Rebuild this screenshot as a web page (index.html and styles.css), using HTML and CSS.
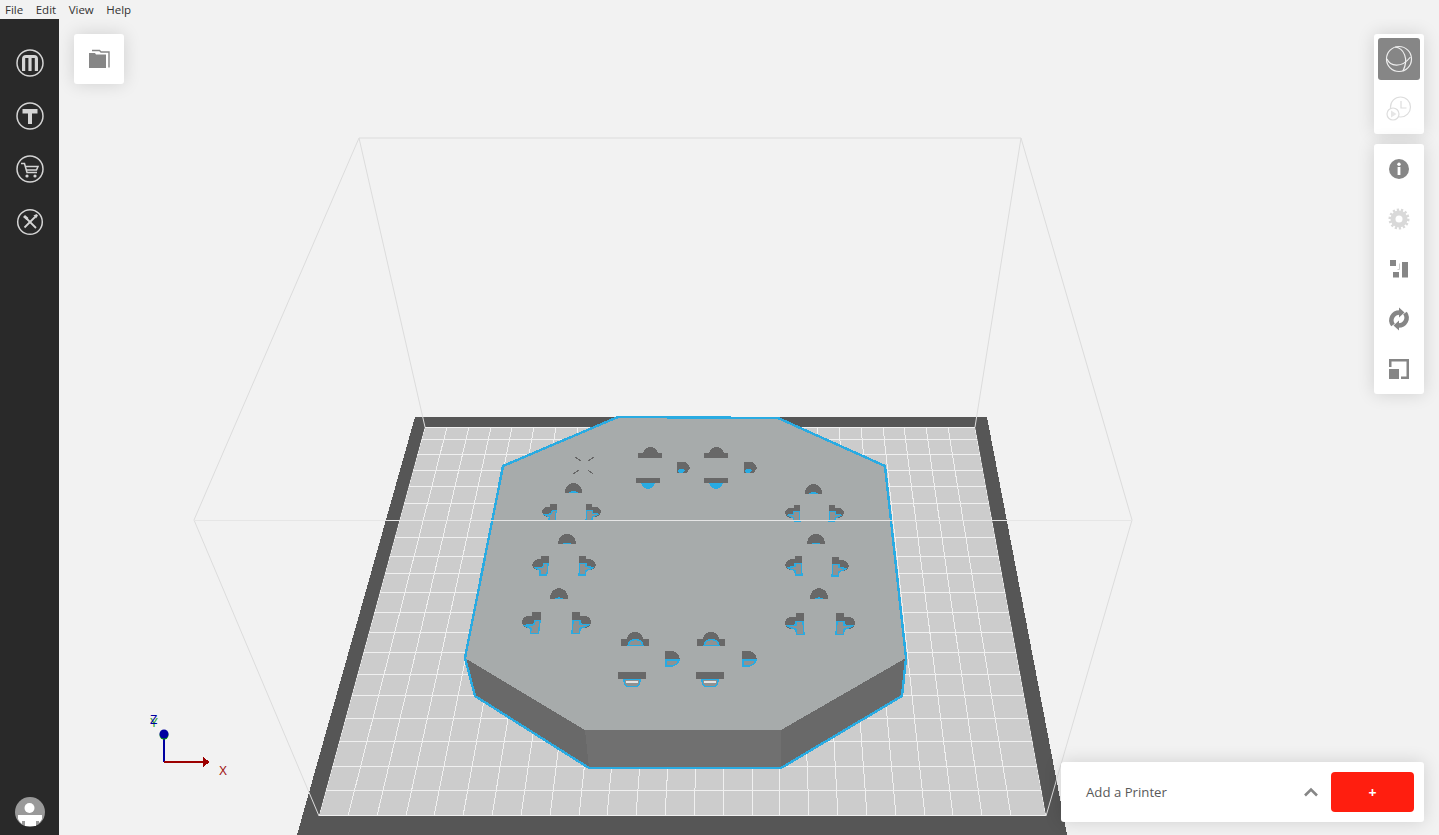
FILE: index.html
```html
<!DOCTYPE html>
<html>
  <head>
    <meta charset="UTF-8" />
    <title>MakerBot Print</title>
    <link rel="stylesheet" href="styles.css">
  </head>
  <body>
    <div class="menubar">
      <span class="menu-item">File</span>
      <span class="menu-item">Edit</span>
      <span class="menu-item">View</span>
      <span class="menu-item">Help</span>
    </div>
    <div class="main">
      <div class="sidebar">
        <div class="side-top">
          <svg class="side-icon" viewBox="0 0 28 28">
            <circle class="ring" cx="14" cy="14" r="13" />
            <path class="ico-fill" d="M6 22V10a4 4 0 0 1 4-4h8a4 4 0 0 1 4 4v12h-3.200V9h-3.200v13h-3.200V9H9.200v13z" />
          </svg>
          <svg class="side-icon" viewBox="0 0 28 28">
            <circle class="ring" cx="14" cy="14" r="13" />
            <path class="ico-fill" d="M6.500 7h15v4.500h-5.500V22h-4V11.500H6.500z" />
          </svg>
          <svg class="side-icon" viewBox="0 0 28 28">
            <circle class="ring" cx="14" cy="14" r="13" />
            <path class="ico-line" d="M5 8.500h3.500l2.500 9h10" />
            <path class="ico-line" d="M9 11.500h13l-1.500 3.500H10" />
            <circle class="ico-fill" cx="11" cy="21" r="1.600" />
            <circle class="ico-fill" cx="19" cy="21" r="1.600" />
          </svg>
          <svg class="side-icon" viewBox="0 0 28 28">
            <circle class="ring" cx="14" cy="14" r="12.300" />
            <path class="ico-wide" d="M10 10l10 10" />
            <path class="ico-wide" d="M19 9L8.500 19.500" />
            <path class="ico-fill" d="M7 9l2-2 3.500 3-2 2zM17.500 7.500l3-1.500 1.500 1.500-2 3z" />
          </svg>
        </div>
        <svg class="avatar" viewBox="0 0 30 30">
          <circle class="avatar-bg" cx="15" cy="15" r="15" />
          <circle class="avatar-fg" cx="14.500" cy="11" r="5" />
          <path class="avatar-fg" d="M3 18h24v4a15 15 0 0 1-3 4v-2h-3v5H10v-5H7v3a15 15 0 0 1-4-5z" />
        </svg>
      </div>

      <div class="viewport">
        <svg class="scene" viewBox="59 19 1380 816">
          <defs>
            <clipPath id="bed-clip"><polygon points="425,427 975,427 1046,816 319,816" /></clipPath>

            <g id="dome">
              <path class="hole" d="M0 10V8C1 3 5 0 9 0s8 3 9 8v2z" />
              <path class="blue-fill" d="M4 10c2-2 8-2 10 0z" />
            </g>
            <g id="bar-up">
              <rect class="hole" x="0" y="6" width="24" height="5" />
              <path class="hole" d="M5 7C5 3 9 0 12.500 0S20 3 20 7z" />
            </g>
            <g id="bar-down">
              <rect class="hole" x="0" y="0" width="24" height="5" />
              <path class="blue-fill" d="M5 5h14c-1 3-4 6-7 6s-6-3-7-6z" />
            </g>
            <g id="bar-up-open">
              <rect class="hole" x="0" y="7" width="28" height="7" />
              <path class="hole" d="M6 8C6 3 9 0 14 0s8 3 8 8z" />
              <path class="blue-open" d="M7 13.500C8 9 11 7.500 14.500 7.500S21 9 22 13.500z" />
            </g>
            <g id="bar-down-open">
              <rect class="hole" x="0" y="0" width="28" height="7" />
              <path class="blue-open" d="M6 7.500h16c0 4-2 6.500-3.500 7h-9C8 14 6 11.500 6 7.500z" />
              <rect class="pale" x="8" y="9" width="12" height="1.500" />
            </g>
            <g id="tab-d">
              <path class="hole" d="M0 0h8c4 1 6 4 7 8l-5 6H0z" />
              <path class="blue-open" d="M1 9h13c-1 3-4 6-7 6H1z" />
            </g>
            <g id="small-d">
              <path class="hole" d="M0 0h8c2 1 4 3 5 6l-3 5H0z" />
              <path class="blue-fill" d="M1 8.500c2-2 5-2 7 0l-3 2.500H2z" />
            </g>
            <g id="flag-left">
              <rect class="hole" x="-9" y="0" width="9" height="8" />
              <ellipse class="hole" cx="-11" cy="10" rx="8" ry="6.500" />
              <path class="blue-open" d="M-1 8.500l-1.500 13h-8l.5-5-6-3c3-1 6 0 9-1l1-4z" />
            </g>
            <g id="flag-right">
              <rect class="hole" x="0" y="0" width="8" height="8" />
              <ellipse class="hole" cx="11" cy="10" rx="8" ry="6.500" />
              <path class="blue-open" d="M1 8.500h7v3.500l8 1c-2 2-6 2.500-8 3.500l-.5 5H0z" />
            </g>
          </defs>

          <polygon class="frame" points="415,417 987,417 1067,835 297,835" />
          <polygon class="bed" points="425,427 975,427 1046,816 319,816" />
          <g class="grid" clip-path="url(#bed-clip)">
            <path d="M319 816L425 427M348 816L447 427M377 816L469 427M406 816L491 427M434 816L512 427M463 816L534 427M492 816L556 427M521 816L578 427M550 816L599 427M579 816L621 427M607 816L643 427M636 816L665 427M665 816L687 427M694 816L708 427M723 816L730 427M752 816L752 427M780 816L774 427M809 816L795 427M838 816L817 427M867 816L839 427M896 816L861 427M925 816L883 427M953 816L904 427M982 816L926 427M1011 816L948 427M1046 816L975 427" />
            <path d="M300 815H1060M300 790H1060M300 766H1060M300 741H1060M300 718H1060M300 695H1060M300 674H1060M300 652H1060M300 632H1060M300 612H1060M300 592H1060M300 573H1060M300 556H1060M300 537H1060M300 503H1060M300 486H1060M300 470H1060M300 454H1060M300 439H1060M300 427H1060" />
          </g>

          <polygon class="side-dark" points="465,658 585,730 589,768 475,696" />
          <polygon class="side-front" points="585,730 781,730 781,768 589,768" />
          <polygon class="side-dark" points="781,730 906,658 902,696 781,768" />
          <polygon class="top-face" points="618,417 778,417 885,466 906,658 781,730 585,730 465,658 503,466" />
          <polygon class="outline" points="618,417 778,418 885,466 906,658 902,696 781,768 589,768 475,696 465,658 503,466" />

          <use href="#bar-up" x="638" y="447" />
          <use href="#bar-up" x="704" y="447" />
          <use href="#small-d" x="677" y="462" />
          <use href="#small-d" x="744" y="462" />
          <use href="#bar-down" x="636" y="478" />
          <use href="#bar-down" x="704" y="478" />
          <path class="marks" d="M575 457l6 4M594 457l-6 4M573 474l6-4M593 474l-5-4" />

          <use href="#dome" transform="translate(565,483) scale(.95)" />
          <use href="#dome" x="558" y="534" />
          <use href="#dome" transform="translate(550,588) scale(1 1.1)" />
          <use href="#dome" transform="translate(805,484) scale(.95)" />
          <use href="#dome" x="807" y="534" />
          <use href="#dome" transform="translate(810,588) scale(1 1.1)" />

          <use href="#flag-left" transform="translate(557,504) scale(.78)" />
          <use href="#flag-left" transform="translate(549,556) scale(.88)" />
          <use href="#flag-left" x="541" y="612" />
          <use href="#flag-right" transform="translate(586,504) scale(.78)" />
          <use href="#flag-right" transform="translate(579,556) scale(.88)" />
          <use href="#flag-right" x="572" y="612" />
          <use href="#flag-right" transform="translate(800,505) scale(-.78 .78)" />
          <use href="#flag-right" transform="translate(802,556) scale(-.88 .88)" />
          <use href="#flag-right" transform="translate(804,613) scale(-1 1)" />
          <use href="#flag-right" transform="translate(829,505) scale(.78)" />
          <use href="#flag-right" transform="translate(832,557) scale(.88)" />
          <use href="#flag-right" x="836" y="613" />

          <use href="#bar-up-open" x="621" y="632" />
          <use href="#bar-up-open" x="697" y="632" />
          <use href="#tab-d" x="665" y="651" />
          <use href="#tab-d" x="742" y="651" />
          <use href="#bar-down-open" x="618" y="672" />
          <use href="#bar-down-open" x="696" y="672" />

          <g class="volume">
            <path d="M359 138H1021M194 520L359 138M1132 520L1021 138M359 138L425 427M1021 138L975 427M194 520L319 816M1132 520L1046 816" />
            <path class="volume-front" d="M194 520H1132" />
          </g>

          <text class="axis-y" x="150" y="727">Y</text>
          <text class="axis-z" x="150" y="724">Z</text>
          <path class="axis-z-line" d="M164 734V762" />
          <path class="axis-x-line" d="M164 762H204" />
          <path class="axis-x-head" d="M203 757l7 5-7 5z" />
          <circle class="axis-y-dot" cx="164" cy="735" r="4.500" />
          <circle class="axis-z-dot" cx="164" cy="734" r="4.500" />
          <text class="axis-x" x="219" y="775">X</text>
        </svg>

        <div class="panel folder-panel">
          <svg class="tool-icon" viewBox="0 0 24 24">
            <path class="tool-line" d="M5 3.500h7.500l1.500 1.500h8v15.500" />
            <path class="tool-fill" d="M2 6h6l1 1.500h10V21H2z" />
          </svg>
        </div>

        <div class="right-tools">
          <div class="panel tool-group view-group">
            <div class="tool-btn active">
              <svg class="sphere" viewBox="0 0 28 28">
                <circle cx="14" cy="14" r="12.500" />
                <path d="M2 14c3 7 14 10 23.500-2" />
                <path d="M10 2c9 1 14 12 8 24" />
              </svg>
            </div>
            <div class="tool-btn">
              <svg class="history" viewBox="0 0 28 28">
                <circle cx="15.500" cy="12" r="10" />
                <path d="M16 6v7h5.500" />
                <circle class="history-small" cx="8" cy="19" r="6" />
                <path class="history-play" d="M6 15.500l5.500 3.500L6 22.500z" />
              </svg>
            </div>
          </div>
          <div class="panel tool-group">
            <div class="tool-btn">
              <svg class="tool-icon" viewBox="0 0 24 24">
                <circle class="tool-fill" cx="12" cy="12" r="10" />
                <rect class="tool-white" x="10.600" y="10" width="2.800" height="8" />
                <circle class="tool-white" cx="12" cy="7.200" r="1.700" />
              </svg>
            </div>
            <div class="tool-btn">
              <svg class="tool-icon" viewBox="0 0 24 24">
                <circle class="gear-teeth" cx="12" cy="12" r="9" />
                <circle class="gear" cx="12" cy="12" r="8.500" />
                <circle class="tool-white" cx="12" cy="12" r="3.500" />
              </svg>
            </div>
            <div class="tool-btn">
              <svg class="tool-icon" viewBox="0 0 24 24">
                <rect class="tool-fill" x="3" y="3" width="6" height="6" />
                <rect class="tool-fill" x="6" y="15" width="6" height="5.500" />
                <rect class="tool-fill" x="15" y="5" width="6" height="15.500" />
                <path class="tool-thin" d="M10.500 12.500h2v-6" />
              </svg>
            </div>
            <div class="tool-btn">
              <svg class="tool-icon" viewBox="0 0 24 24">
                <path class="tool-arc" d="M6 18C2 12.500 6 5.500 12.500 5.500" />
                <path class="tool-arc" d="M18 6c4 5.500 0 12.500-6.500 12.500" />
                <path class="tool-fill" d="M12 .500l5.500 5L12 10.500zM12 23.500l-5.500-5 5.500-5z" />
              </svg>
            </div>
            <div class="tool-btn">
              <svg class="tool-icon" viewBox="0 0 24 24">
                <path class="tool-fill" d="M2 12h10v10H2z" />
                <path class="tool-fill" d="M2 2h20v20H14v-2.500h5.500V4.500h-15V10H2z" />
              </svg>
            </div>
          </div>
        </div>

        <div class="panel printer-panel">
          <span class="printer-label">Add a Printer</span>
          <svg class="chevron" viewBox="0 0 16 10"><path d="M2 8.500l6-6 6 6" /></svg>
          <div class="add-btn">+</div>
        </div>
      </div>
    </div>
  </body>
</html>
```

FILE: styles.css
```css
html, body {
  height: 100%;
  margin: 0;
  padding: 0;
}

body {
  display: flex;
  flex-direction: column;
  overflow: hidden;
  background-color: #f2f2f2;
  font-family: "Open Sans", "Noto Sans", sans-serif;
}

.menubar {
  display: flex;
  flex: 0 0 19px;
  gap: 12.5px;
  align-items: center;
  padding-left: 5px;
  background-color: #f2f2f2;
  color: #333;
  font-size: 11.5px;
}

.main {
  display: flex;
  flex: 1;
  min-height: 0;
}

.sidebar {
  display: flex;
  flex: 0 0 59px;
  flex-direction: column;
  align-items: center;
  justify-content: space-between;
  padding: 30px 0 8px;
  box-sizing: border-box;
  background-color: #292929;
}

.side-top {
  display: flex;
  flex-direction: column;
  gap: 25px;
}

.side-icon {
  display: block;
  width: 28px;
  height: 28px;
}

.ring, .ico-line {
  fill: none;
  stroke: #d4d4d4;
  stroke-width: 1.5;
}

.ico-fill {
  fill: #d4d4d4;
}

.ico-wide {
  fill: none;
  stroke: #d4d4d4;
  stroke-width: 1.8;
}

.avatar {
  display: block;
  width: 30px;
  height: 30px;
}

.avatar-bg {
  fill: #999;
}

.avatar-fg {
  fill: #fff;
}

.viewport {
  position: relative;
  flex: 1;
  overflow: hidden;
}

.scene {
  position: absolute;
  top: 0;
  left: 0;
  width: 1380px;
  height: 816px;
  shape-rendering: crispEdges;
}

.frame {
  fill: #565656;
}

.bed {
  fill: #ccc;
}

.grid path {
  fill: none;
  stroke: #f0f0f0;
  stroke-width: 1;
}

.side-dark {
  fill: #696969;
}

.side-front {
  fill: #707070;
}

.top-face {
  fill: #a7abab;
}

.outline {
  fill: none;
  stroke: #29abe2;
  stroke-width: 2.4;
}

.hole {
  fill: #686868;
}

.blue-fill {
  fill: #29abe2;
}

.blue-open {
  fill: #8f9191;
  stroke: #29abe2;
  stroke-width: 1.5;
}

.pale {
  fill: #e4e4e4;
}

.marks {
  fill: none;
  stroke: #666;
  stroke-width: 1;
}

.volume path {
  fill: none;
  stroke: #dcdcdc;
  stroke-width: 1;
  shape-rendering: auto;
}

.volume .volume-front {
  stroke: #e6e6e6;
  shape-rendering: crispEdges;
}

.axis-x, .axis-y, .axis-z {
  font-family: "Liberation Sans", sans-serif;
  font-size: 12px;
}

.axis-x {
  fill: #a01010;
}

.axis-y {
  fill: #2e9a2e;
}

.axis-z {
  fill: #0000a0;
}

.axis-z-line {
  stroke: #0000a0;
  stroke-width: 2;
}

.axis-x-line {
  stroke: #9c0000;
  stroke-width: 2;
}

.axis-x-head {
  fill: #9c0000;
}

.axis-y-dot {
  fill: #0a9a0a;
  shape-rendering: auto;
}

.axis-z-dot {
  fill: #0000a0;
  shape-rendering: auto;
}

.panel {
  background-color: #fff;
  border-radius: 3px;
  box-shadow: 0 0 18px rgba(0, 0, 0, 0.14);
}

.folder-panel {
  position: absolute;
  top: 15px;
  left: 15px;
  display: flex;
  width: 50px;
  height: 50px;
  align-items: center;
  justify-content: center;
}

.right-tools {
  position: absolute;
  top: 15px;
  right: 15px;
  display: flex;
  flex-direction: column;
  gap: 10px;
}

.tool-group {
  display: flex;
  flex-direction: column;
  width: 50px;
  align-items: center;
}

.view-group {
  height: 100px;
  padding-top: 4px;
  box-sizing: border-box;
}

.tool-btn {
  display: flex;
  width: 42px;
  height: 50px;
  align-items: center;
  justify-content: center;
}

.tool-btn.active {
  height: 42px;
  margin-bottom: 8px;
  border-radius: 3px;
  background-color: #868686;
}

.view-group .tool-btn:last-child {
  height: 42px;
}

.tool-icon {
  display: block;
  width: 24px;
  height: 24px;
}

.tool-fill {
  fill: #868686;
}

.tool-line {
  fill: none;
  stroke: #868686;
  stroke-width: 1.4;
}

.tool-thin {
  fill: none;
  stroke: #ccc;
  stroke-width: 1;
}

.tool-arc {
  fill: none;
  stroke: #868686;
  stroke-width: 4.5;
}

.tool-white {
  fill: #fff;
}

.gear {
  fill: #d9d9d9;
}

.gear-teeth {
  fill: none;
  stroke: #d9d9d9;
  stroke-width: 3;
  stroke-dasharray: 2.2 1.8;
}

.sphere {
  width: 28px;
  height: 28px;
}

.sphere circle, .sphere path {
  fill: none;
  stroke: #eee;
  stroke-width: 1.2;
}

.history {
  width: 28px;
  height: 28px;
}

.history circle, .history path {
  fill: none;
  stroke: #ddd;
  stroke-width: 1.2;
}

.history .history-small {
  fill: #fff;
}

.history .history-play {
  fill: #e6e6e6;
  stroke: none;
}

.printer-panel {
  position: absolute;
  right: 15px;
  bottom: 13px;
  display: flex;
  width: 363px;
  height: 60px;
  padding: 0 10px 0 25px;
  box-sizing: border-box;
  align-items: center;
}

.printer-label {
  flex: 1;
  color: #595959;
  font-size: 13.2px;
}

.chevron {
  width: 16px;
  height: 10px;
  margin-right: 12px;
}

.chevron path {
  fill: none;
  stroke: #868686;
  stroke-width: 2.6;
}

.add-btn {
  display: flex;
  width: 83px;
  height: 40px;
  border-radius: 4px;
  background-color: #ff1e0f;
  color: #fff;
  font-size: 14px;
  font-weight: 700;
  align-items: center;
  justify-content: center;
}
```
